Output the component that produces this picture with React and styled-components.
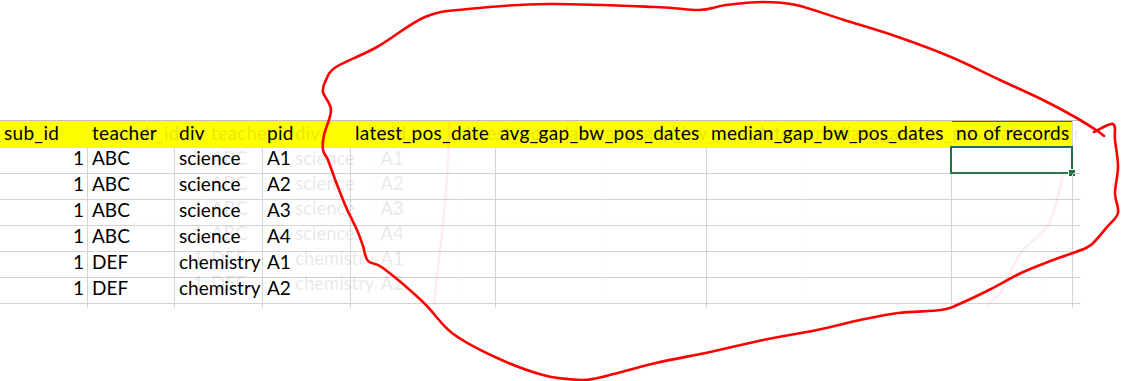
import styled, { createGlobalStyle } from 'styled-components'

const GlobalStyle = createGlobalStyle`
  html, body {
    margin: 0;
    padding: 0;
    background: #fff;
    overflow: hidden;
  }
`

const COLS = [88, 87, 88, 88, 145, 211, 245, 121, 6]

const HEADERS = ['sub_id', 'teacher', 'div', 'pid', 'latest_pos_date', 'avg_gap_bw_pos_dates', 'median_gap_bw_pos_dates', 'no of records']

const ROWS = [
    [1, 'ABC', 'science', 'A1'],
    [1, 'ABC', 'science', 'A2'],
    [1, 'ABC', 'science', 'A3'],
    [1, 'ABC', 'science', 'A4'],
    [1, 'DEF', 'chemistry', 'A1'],
    [1, 'DEF', 'chemistry', 'A2'],
]

// hand drawn loop, traced from the screen
const LOOP = [
    [1104, 136], [1096, 130], [1075, 117], [1043, 100], [1000, 80], [951, 57], [898, 37],
    [844, 20], [796, 5], [763, 2], [726, 5], [699, 10], [656, 7], [548, 4], [468, 9],
    [425, 17], [377, 47], [336, 67], [326, 80], [323, 92], [331, 110], [324, 135], [323, 150],
    [328, 160], [336, 182], [346, 207], [357, 230], [363, 246], [368, 261], [383, 268],
    [423, 302], [452, 333], [495, 357], [543, 375], [581, 380], [602, 377], [656, 363],
    [710, 352], [763, 340], [817, 330], [860, 320], [898, 313], [941, 310], [957, 305],
    [989, 290], [1021, 273], [1053, 260], [1086, 248], [1096, 240], [1107, 227],
    [1118, 213], [1115, 193], [1118, 167], [1115, 140], [1113, 124], [1094, 132],
]

const FAINT_LEFT = [[449, 122], [448, 160], [444, 215], [438, 268], [434, 305]]
const FAINT_RIGHT = [[1063, 172], [1057, 200], [1047, 227], [1023, 250], [1013, 267], [1000, 293], [987, 305]]

const smoothPath = (pts) => {
    let d = `M${pts[0][0]},${pts[0][1]}`
    for (let i = 0; i < pts.length - 1; i++) {
        const p0 = pts[i - 1] || pts[i]
        const p1 = pts[i]
        const p2 = pts[i + 1]
        const p3 = pts[i + 2] || p2
        const c1 = [p1[0] + (p2[0] - p0[0]) / 6, p1[1] + (p2[1] - p0[1]) / 6]
        const c2 = [p2[0] - (p3[0] - p1[0]) / 6, p2[1] - (p3[1] - p1[1]) / 6]
        d += ` C${c1[0]},${c1[1]} ${c2[0]},${c2[1]} ${p2[0]},${p2[1]}`
    }
    return d
}

const Page = styled.div`
    position: relative;
    width: 1122px;
    height: 381px;
    overflow: hidden;
    padding-top: 120px;
    box-sizing: border-box;
    font-family: 'Lato', 'Liberation Sans', sans-serif;
    font-size: 19px;
    color: #000;
`
const Sheet = styled.div`
    display: grid;
    grid-template-columns: ${COLS.map(w => `${w}px`).join(' ')};
    width: max-content;
    border-top: 1px solid #bfbfbf;
`
const HeaderCell = styled.div`
    box-sizing: border-box;
    height: 27px;
    padding: 0 0 3px 4px;
    display: flex;
    align-items: flex-end;
    line-height: 1.2;
    letter-spacing: 0.3px;
    white-space: nowrap;
    background: ${props => props.ghost || props.stub ? 'transparent' : '#ffff00'};
    border-right: 1px solid ${props => props.edge ? '#d4d4d4' : 'transparent'};
    box-shadow: ${props => props.active ? 'inset 0 1px 0 #217346' : 'none'};
`
const Cell = styled.div`
    position: relative;
    box-sizing: border-box;
    height: 26px;
    padding: 0 3px 3px 4px;
    display: flex;
    align-items: flex-end;
    justify-content: ${props => props.num ? 'flex-end' : 'flex-start'};
    line-height: 1.2;
    white-space: nowrap;
    border-bottom: 1px solid #d4d4d4;
    border-right: 1px solid ${props => props.stub ? 'transparent' : '#d4d4d4'};
`
const TailCell = styled.div`
    box-sizing: border-box;
    height: 4px;
    border-right: 1px solid ${props => props.stub ? 'transparent' : '#d4d4d4'};
`
const Selection = styled.div`
    position: absolute;
    left: -2px;
    top: -2px;
    right: -1px;
    bottom: -1px;
    border: 2px solid #217346;
    pointer-events: none;
`
const FillHandle = styled.div`
    position: absolute;
    right: -4px;
    bottom: -4px;
    width: 6px;
    height: 6px;
    background: #217346;
    border: 1px solid #fff;
    border-right: none;
    border-bottom: none;
`
const GhostClip = styled.div`
    position: absolute;
    left: 0;
    top: 120px;
    width: 1078px;
    height: 200px;
    overflow: hidden;
    pointer-events: none;
`
const Ghost = styled.div`
    transform: translate(122px, 1px) scale(0.968);
    transform-origin: 0 0;
    opacity: 0.085;
`
const Ink = styled.svg`
    position: absolute;
    left: 0;
    top: 0;
    pointer-events: none;
`

const Spreadsheet = ({ ghost }) => (
    <Sheet>
        {HEADERS.map((h, i) => (
            <HeaderCell key={h} ghost={ghost} edge={i === HEADERS.length - 1} active={!ghost && i === 7}>
                {h}
            </HeaderCell>
        ))}
        <HeaderCell stub />
        {ROWS.map((row, r) => COLS.map((_, c) => (
            <Cell key={`${r}-${c}`} num={c === 0} stub={c === COLS.length - 1}>
                {row[c]}
                {!ghost && r === 0 && c === 7 && <Selection><FillHandle /></Selection>}
            </Cell>
        )))}
        {COLS.map((_, c) => <TailCell key={c} stub={c === COLS.length - 1} />)}
    </Sheet>
)

export default function App() {
    return (
        <Page>
            <GlobalStyle />
            <Spreadsheet />
            <GhostClip>
                <Ghost>
                    <Spreadsheet ghost />
                </Ghost>
            </GhostClip>
            <Ink width="1122" height="381" viewBox="0 0 1122 381">
                <path d={smoothPath(FAINT_LEFT)} fill="none" stroke="#ff0000" strokeOpacity="0.07" strokeWidth="2.5" />
                <path d={smoothPath(FAINT_RIGHT)} fill="none" stroke="#ff0000" strokeOpacity="0.07" strokeWidth="2.5" />
                <path d={smoothPath(LOOP)} fill="none" stroke="#ff0000" strokeWidth="2.6" strokeLinejoin="round" strokeLinecap="round" />
            </Ink>
        </Page>
    )
}
